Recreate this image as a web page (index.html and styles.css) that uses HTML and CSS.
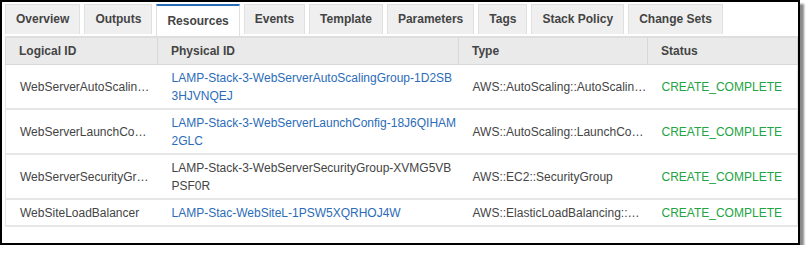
FILE: index.html
```html
<!DOCTYPE html>
<html lang="en">
<head>
    <meta charset="UTF-8">
    <link rel="stylesheet" href="styles.css">
    <title>Stack Resources</title>
</head>
<body>
    <div class="frame">
        <div class="tabs">
            <div class="tab">Overview</div>
            <div class="tab">Outputs</div>
            <div class="tab active">Resources</div>
            <div class="tab">Events</div>
            <div class="tab">Template</div>
            <div class="tab">Parameters</div>
            <div class="tab">Tags</div>
            <div class="tab">Stack Policy</div>
            <div class="tab">Change Sets</div>
        </div>
        <table class="grid">
            <colgroup>
                <col class="c-logical">
                <col class="c-physical">
                <col class="c-type">
                <col class="c-status">
            </colgroup>
            <thead>
                <tr>
                    <th>Logical ID</th>
                    <th>Physical ID</th>
                    <th>Type</th>
                    <th>Status</th>
                </tr>
            </thead>
            <tbody>
                <tr>
                    <td>WebServerAutoScalin…</td>
                    <td><a class="link">LAMP-Stack-3-WebServerAutoScalingGroup-1D2SB<br>3HJVNQEJ</a></td>
                    <td>AWS::AutoScaling::AutoScalin…</td>
                    <td class="ok">CREATE_COMPLETE</td>
                </tr>
                <tr>
                    <td>WebServerLaunchCo…</td>
                    <td><a class="link">LAMP-Stack-3-WebServerLaunchConfig-18J6QIHAM<br>2GLC</a></td>
                    <td>AWS::AutoScaling::LaunchCo…</td>
                    <td class="ok">CREATE_COMPLETE</td>
                </tr>
                <tr>
                    <td>WebServerSecurityGr…</td>
                    <td>LAMP-Stack-3-WebServerSecurityGroup-XVMG5VB<br>PSF0R</td>
                    <td>AWS::EC2::SecurityGroup</td>
                    <td class="ok">CREATE_COMPLETE</td>
                </tr>
                <tr>
                    <td>WebSiteLoadBalancer</td>
                    <td><a class="link">LAMP-Stac-WebSiteL-1PSW5XQRHOJ4W</a></td>
                    <td>AWS::ElasticLoadBalancing::…</td>
                    <td class="ok">CREATE_COMPLETE</td>
                </tr>
            </tbody>
        </table>
    </div>
</body>
</html>
```

FILE: styles.css
```css
body {
    margin: 0;
    padding: 0;
    background-color: #fff;
    font-family: "Liberation Sans", Arial, sans-serif;
    font-size: 12px;
    color: #444;
}

.frame {
    width: 800px;
    height: 245px;
    border: 2px solid #000;
    box-shadow: 4px 4px 2px #8a8a8a;
    padding: 2px 1px 0 3px;
    box-sizing: border-box;
    background-color: #fff;
}

.tabs {
    display: flex;
    gap: 4px;
    height: 32px;
}

.tab {
    height: 30px;
    line-height: 29px;
    padding: 0 10px;
    background-color: #efefef;
    border: 1px solid #e0e0e0;
    border-bottom: none;
    font-weight: bold;
    color: #444;
    box-sizing: border-box;
}

.tab.active {
    height: 32px;
    background-color: #fff;
    border-top: 2px solid #2b6cb8;
    line-height: 31px;
}

.grid {
    width: 792px;
    border-collapse: collapse;
    table-layout: fixed;
}

.c-logical { width: 152px; }
.c-physical { width: 301px; }
.c-type { width: 189px; }
.c-status { width: 150px; }

.grid th {
    height: 27px;
    padding: 0 13px;
    text-align: left;
    font-weight: bold;
    background-color: #eaeaea;
    border: 1px solid #d8d8d8;
    border-top: 2px solid #dedede;
    box-sizing: border-box;
}

.grid td {
    padding: 4px 13px 3px 14px;
    line-height: 18px;
    border-bottom: 2px solid #e6e6e6;
    white-space: nowrap;
    overflow: hidden;
}

.grid td:first-child {
    border-left: 1px solid #e6e6e6;
}

.grid td:last-child {
    border-right: 1px solid #e6e6e6;
}

.link {
    color: #2b6cb8;
    text-decoration: none;
}

.ok {
    color: #22a344;
}
```
